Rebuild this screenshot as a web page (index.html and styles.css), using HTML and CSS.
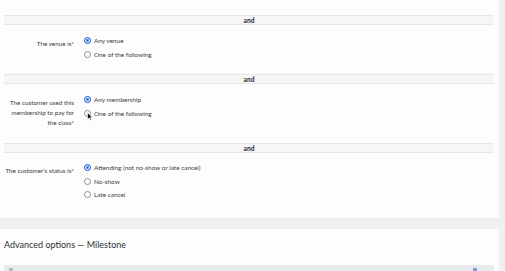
FILE: index.html
```html
<!doctype html>
<html>
  <head>
    <meta charset="UTF-8">
    <meta name="viewport" content="width=device-width, initial-scale=1.0">
    <title>Milestone rules</title>
    <link rel="stylesheet" href="styles.css">
  </head>
  <body>
    <div class="page">
      <div class="panel rules">
        <div class="and-bar">and</div>
        <div class="rule">
          <div class="rule-label">The venue is*</div>
          <div class="options">
            <label class="option"><span class="radio checked"></span>Any venue</label>
            <label class="option"><span class="radio"></span>One of the following</label>
          </div>
        </div>

        <div class="and-bar">and</div>
        <div class="rule">
          <div class="rule-label">The customer used this membership to pay for the class*</div>
          <div class="options">
            <label class="option"><span class="radio checked"></span>Any membership</label>
            <label class="option hovered">
              <span class="radio"></span>One of the following
              <svg class="cursor" width="6" height="9" viewBox="0 0 6 9">
                <path d="M0.5 0.5 L0.5 7.5 L2.2 5.9 L3.4 8.5 L4.4 8 L3.3 5.5 L5.5 5.5 Z" fill="#111" stroke="#fff" stroke-width="0.6"/>
              </svg>
            </label>
          </div>
        </div>

        <div class="and-bar">and</div>
        <div class="rule last">
          <div class="rule-label">The customer's status is*</div>
          <div class="options">
            <label class="option"><span class="radio checked"></span>Attending (not no-show or late cancel)</label>
            <label class="option"><span class="radio"></span>No-show</label>
            <label class="option"><span class="radio"></span>Late cancel</label>
          </div>
        </div>
      </div>

      <div class="panel advanced">
        <h2>Advanced options — Milestone</h2>
        <div class="adv-box">
          <span class="adv-icon"></span>
          <span class="adv-toggle"></span>
        </div>
      </div>
    </div>
  </body>
</html>
```

FILE: styles.css
```css
* {
  margin: 0;
  padding: 0;
  box-sizing: border-box;
}

body {
  width: 505px;
  height: 271px;
  overflow: hidden;
  background: #eff0f2;
  font-family: Lato, "Open Sans", Arial, sans-serif;
  color: #3a3d42;
}

.page {
  width: 499px;
}

.panel {
  background: #fdfdfe;
}

.rules {
  padding: 15px 5px 16px 4px;
}

.and-bar {
  height: 10px;
  line-height: 8px;
  font-size: 6.6px;
  font-weight: 700;
  text-align: center;
  color: #26292d;
  background: #f5f6f8;
  border-top: 1px solid #e6e7ea;
  border-bottom: 1px solid #e6e7ea;
}

.rule {
  display: flex;
  gap: 10px;
  padding: 9px 0 13px;
}

.rule.last {
  padding: 8px 0 0;
}

.rule-label {
  width: 72px;
  margin-left: -2px;
  padding-top: 5px;
  padding-bottom: 2px;
  font-size: 6.3px;
  line-height: 10px;
  text-align: right;
}

.options {
  display: flex;
  flex-direction: column;
}

.option {
  position: relative;
  display: flex;
  align-items: center;
  gap: 3px;
  height: 13.5px;
  font-size: 6.4px;
}

.radio {
  width: 7px;
  height: 7px;
  border-radius: 50%;
  border: 1px solid #8d9096;
  background: #fff;
}

.radio.checked {
  border-color: #2c6be0;
  background: #2c6be0;
  box-shadow: inset 0 0 0 1.1px #fff;
}

.cursor {
  position: absolute;
  left: 3px;
  top: 5px;
}

.advanced {
  margin-top: 11px;
  padding: 9px 5px 0 4px;
  height: 42px;
}

.advanced h2 {
  font-size: 9px;
  font-weight: 400;
  line-height: 14px;
  color: #2e3135;
  margin-bottom: 13px;
}

.adv-box {
  display: flex;
  justify-content: space-between;
  height: 8px;
  padding: 3px 17px 0 5px;
  background: #e8e9ec;
  border-radius: 2px 2px 0 0;
}

.adv-icon {
  width: 4px;
  height: 3px;
  background: #b5b8be;
}

.adv-toggle {
  width: 4px;
  height: 3px;
  background: #7f9ed6;
}
```
